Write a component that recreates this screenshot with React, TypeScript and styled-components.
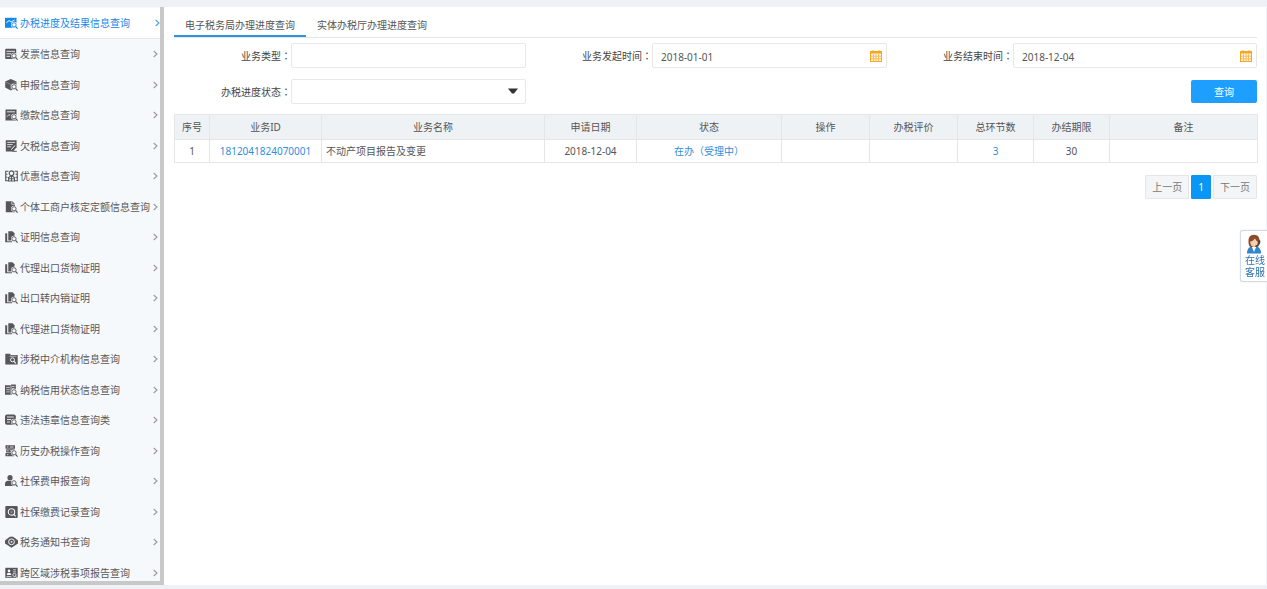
import React, { ReactNode } from "react";
import styled, { createGlobalStyle, css } from "styled-components";

const GlobalStyle = createGlobalStyle`
  *, *::before, *::after { box-sizing: border-box; }
  body {
    margin: 0;
    background: #eef1f5;
    color: #555;
    font: 10px/14px "Noto Sans", "Noto Sans CJK SC", sans-serif;
  }
  button, input, select { font: inherit; color: inherit; }
  a { color: inherit; text-decoration: none; }
`;

const Page = styled.div`
  display: flex;
  height: 100vh;
  padding: 7px 1px 4px 0;
`;

const Sidebar = styled.nav`
  flex: 0 0 164px;
  overflow: hidden;
  padding-top: 1px;
  background: #f5f9fc;
  border: solid #c8c8c8;
  border-width: 0 4px 4px 0;
`;

const Menu = styled.ul`
  margin: 0;
  padding: 0;
  list-style: none;
`;

const MenuLink = styled.a<{ $active?: boolean }>`
  --ground: #f5f9fc;
  display: flex;
  align-items: center;
  height: 31px;
  padding: 0 2px 0 5px;
  white-space: nowrap;
  color: #555759;
  li:nth-child(even) > & { height: 30px; }
  ${(p) =>
    p.$active &&
    css`
      --ground: #fff;
      padding-right: 0;
      background: #fff;
      border-bottom: 1px solid #e4e8eb;
      color: #1488e8;
    `}
`;

const MenuText = styled.span`
  flex: 1;
  margin-left: 2px;
`;

const MenuIcon = styled.svg`
  flex: none;
  width: 13px;
  height: 12px;
`;

const Chevron = styled.svg`
  flex: none;
  width: 5px;
  height: 8px;
  color: #999;
  ${MenuLink}[aria-current] & { color: #4ba3ea; }
`;

const Main = styled.main`
  flex: 1;
  min-width: 0;
  padding: 7px 9px 0 10px;
  background: #fff;
`;

const Tabs = styled.div`
  display: flex;
  border-bottom: 1px solid #e3e5e7;
`;

const Tab = styled.button<{ $active?: boolean }>`
  height: 23px;
  padding: 0 11px;
  background: none;
  border: 0;
  border-bottom: 2px solid ${(p) => (p.$active ? "#2c95dd" : "transparent")};
`;

const Form = styled.form`
  display: grid;
  grid-template-columns: repeat(3, 1fr);
  row-gap: 11px;
  padding: 5px 0 10px;
`;

const Field = styled.div<{ $last?: boolean }>`
  display: flex;
  align-items: center;
  padding-right: ${(p) => (p.$last ? 0 : 9)}px;
`;

const Label = styled.label`
  flex: 0 0 117px;
  text-align: right;
  color: #444;
`;

const Control = styled.div`
  position: relative;
  display: flex;
  align-items: center;
  flex: 1;
  min-width: 0;
  height: 25px;
  background: #fff;
  border: 1px solid #e8e8e8;
  border-radius: 2px;
`;

const Input = styled.input`
  flex: 1;
  min-width: 0;
  height: 23px;
  padding: 2px 8px 0;
  background: none;
  border: 0;
  outline: 0;
`;

const Select = styled.select`
  width: 100%;
  height: 23px;
  padding: 0 8px;
  appearance: none;
  background: none;
  border: 0;
  outline: 0;
`;

const Caret = styled.svg`
  position: absolute;
  right: 7px;
  top: 8px;
  width: 10px;
  height: 6px;
  pointer-events: none;
`;

const DateButton = styled.button`
  display: flex;
  padding: 0 4px;
  background: none;
  border: 0;
`;

const SubmitCell = styled.div`
  grid-column: 3;
  display: flex;
  justify-content: flex-end;
  align-items: center;
`;

const Submit = styled.button`
  width: 66px;
  height: 23px;
  padding: 0;
  background: #1e9fff;
  border: 0;
  border-radius: 2px;
  color: #fff;
`;

const Table = styled.table`
  width: 100%;
  table-layout: fixed;
  border-collapse: collapse;
`;

const Th = styled.th`
  height: 25px;
  padding: 0;
  background: #eff2f5;
  border: 1px solid #e4e6e8;
  font-weight: 400;
`;

const Td = styled.td<{ $left?: boolean }>`
  height: 23px;
  padding: 0 4px;
  border: 1px solid #e4e6e8;
  text-align: ${(p) => (p.$left ? "left" : "center")};
  white-space: nowrap;
`;

const CellLink = styled.a`
  color: #2e8fdc;
`;

const Pager = styled.nav`
  display: flex;
  justify-content: flex-end;
  gap: 2px;
  margin-top: 12px;
`;

const PageButton = styled.button<{ $active?: boolean }>`
  height: 24px;
  padding: 0 6px;
  background: ${(p) => (p.$active ? "#0a96f5" : "#f4f5f7")};
  border: 1px solid ${(p) => (p.$active ? "#0a96f5" : "#e4e6e9")};
  border-radius: 1px;
  color: ${(p) => (p.$active ? "#fff" : "#777")};
`;

const Service = styled.a`
  position: fixed;
  right: 0;
  top: 230px;
  width: 27px;
  padding: 3px 2px 3px 4px;
  background: #fff;
  border: 1px solid #cfdbe8;
  border-right: 0;
  border-radius: 3px 0 0 3px;
  box-shadow: 0 0 2px #dde5ee;
  color: #2a6fae;
  line-height: 12px;
`;

const Avatar = styled.svg`
  display: block;
  width: 18px;
  height: 20px;
`;

const Lens = () => (
  <>
    <circle cx="9" cy="7.8" r="3" fill="var(--ground)" />
    <path d="m10.600 9.500 2 2" stroke="var(--ground)" strokeWidth="2.400" />
    <circle cx="9" cy="7.800" r="2.100" fill="none" stroke="currentColor" strokeWidth=".9" />
    <path d="m10.600 9.500 2 2.100" stroke="currentColor" strokeWidth="1.100" />
  </>
);

const icons: Record<string, ReactNode> = {
  progress: (
    <>
      <path d="M0 .8h11.500v10H0z" fill="currentColor" />
      <path d="M1.300 5.800 4 3.600l2.200 1.200 3.500-1.800" fill="none" stroke="#fff" strokeWidth=".9" />
      <Lens />
    </>
  ),
  invoice: (
    <>
      <rect x=".2" y=".8" width="11" height="10.200" rx="1" fill="currentColor" />
      <path d="M1.500 3.300h8.500M1.500 5.800h4.500M1.500 8.300H5" stroke="var(--ground)" strokeWidth=".9" />
      <Lens />
    </>
  ),
  cube: (
    <>
      <path d="m5.800 0 5.700 2.600v5.800l-5.700 3L.2 8.400V2.600z" fill="currentColor" />
      <path d="m.8 3.200 5 2.300 5-2.300M5.800 5.500v5" fill="none" stroke="#b4b8bb" strokeWidth=".5" />
      <Lens />
    </>
  ),
  payment: (
    <>
      <path d="M.5.5h11V11.500H.5z" fill="currentColor" />
      <path d="M2 2.800h8M2 7.600l2-2 1.200 1" fill="none" stroke="var(--ground)" strokeWidth=".9" />
      <Lens />
    </>
  ),
  arrears: (
    <>
      <path d="M.8.3h10.800v7L8 11.500H.8z" fill="currentColor" />
      <path d="M2.200 2.400h7.900M2.200 4.600h5.500M2.200 6.800h4" stroke="var(--ground)" strokeWidth=".8" />
      <path d="M6.300 9.700 10 5.400" stroke="var(--ground)" strokeWidth="1" />
      <path d="M7.500 11.300h4.300" stroke="currentColor" />
    </>
  ),
  benefit: (
    <>
      <path d="M3.500 1.200H.7v9.600h2.800M9.500 1.200h2.800v9.600H9.500M.7 4.200h1.800M.7 7.300h1.800M10.500 4.200h1.800M10.500 7.300h1.800" fill="none" stroke="currentColor" strokeWidth="1.100" />
      <circle cx="6.500" cy="3.200" r="2.300" fill="none" stroke="currentColor" strokeWidth="1.200" />
      <path d="M3.500 11V7.800L5.200 6.300h2.600l1.700 1.500V11zM6.500 6.500V11M4 8.800h5" fill="none" stroke="currentColor" strokeWidth="1.100" />
    </>
  ),
  household: (
    <>
      <path d="M.8.3h6.500L10 3v8.200H.8z" fill="currentColor" />
      <path d="M6.800.3v3H10" fill="none" stroke="var(--ground)" strokeWidth=".7" />
      <Lens />
    </>
  ),
  certificate: (
    <>
      <path d="M3.300.3h4.200L9.500 2.300v7.200H3.300z" fill="currentColor" />
      <path d="M2.200 2.300H.2v8.900h7V10.200H2.200z" fill="currentColor" />
      <Lens />
    </>
  ),
  agency: (
    <>
      <path d="M.3.800h4.500L6 2h6.700v9.500H.3z" fill="currentColor" />
      <path d="M4.500 3.200h7" stroke="var(--ground)" strokeWidth=".6" />
      <circle cx="7.500" cy="6.800" r="2" fill="none" stroke="var(--ground)" />
      <path d="m9 8.400 1.900 2" stroke="var(--ground)" strokeWidth="1.100" />
    </>
  ),
  credit: (
    <>
      <path d="M0 1.300h6V.5h4.800v7H7v3.300H0z" fill="currentColor" />
      <path d="M1.300 3.500h3.500M1.300 5.700h3.500M1.300 7.900h3.500M7 2.500h2.500M7 4.500h2.500M6 1.500v9" stroke="var(--ground)" strokeWidth=".7" />
      <Lens />
    </>
  ),
  violation: (
    <>
      <rect y=".5" width="10.800" height="10.300" rx="2" fill="currentColor" />
      <path d="M2 3h6.800M2 5.500h4M2 8h3" stroke="var(--ground)" strokeWidth=".9" />
      <Lens />
    </>
  ),
  history: (
    <>
      <path d="M.5.300h9.500v3.400H.5zM1.200 4.200h8.300v3.200H1.200zM.5 8h8.500v3.300H.5z" fill="currentColor" />
      <path d="M2 2h1.400M2.200 5.800h1.400M2 9.700h1.400M5 2h3.500M5 5.800h2" stroke="var(--ground)" strokeWidth=".8" />
      <Lens />
    </>
  ),
  person: (
    <>
      <circle cx="5" cy="2.700" r="2.600" fill="currentColor" />
      <path d="M0 11V9q0-2.800 3-3.200h4q2.400.4 2.800 2.200v3z" fill="currentColor" />
      <Lens />
    </>
  ),
  record: (
    <>
      <rect x=".3" width="12.400" height="12" rx="1" fill="currentColor" />
      <circle cx="6.500" cy="5.900" r="3.200" fill="none" stroke="var(--ground)" strokeWidth="1.100" />
      <circle cx="6.500" cy="5.900" r="1.200" fill="#8b8d8f" />
      <path d="m8.600 8.200 2 2.100" stroke="var(--ground)" strokeWidth="1.100" />
    </>
  ),
  notice: (
    <>
      <path d="M0 4.500 2.500 2.500Q6.500-1.300 10.500 2.500L13 4.500v3L6.500 11.800 0 7.500z" fill="currentColor" />
      <circle cx="6.500" cy="5.800" r="2.900" fill="none" stroke="var(--ground)" />
      <circle cx="6.500" cy="5.800" r=".9" fill="var(--ground)" />
    </>
  ),
  region: (
    <>
      <path d="M.3.800h12.400v10H.3z" fill="currentColor" />
      <circle cx="4" cy="3.900" r="1.300" fill="var(--ground)" />
      <path d="M1.700 8q0-2.300 2.300-2.300T6.300 8z" fill="var(--ground)" />
      <path d="M8 2.800h3M8 4.800h3M1.500 9.500h5" stroke="var(--ground)" strokeWidth=".7" />
      <circle cx="9.400" cy="7.900" r="1.600" fill="none" stroke="var(--ground)" strokeWidth=".8" />
      <path d="m10.600 9.200 2.200 2.300" stroke="var(--ground)" strokeWidth=".9" />
    </>
  ),
};

const menu: [string, string][] = [
  ["progress", "办税进度及结果信息查询"],
  ["invoice", "发票信息查询"],
  ["cube", "申报信息查询"],
  ["payment", "缴款信息查询"],
  ["arrears", "欠税信息查询"],
  ["benefit", "优惠信息查询"],
  ["household", "个体工商户核定定额信息查询"],
  ["certificate", "证明信息查询"],
  ["certificate", "代理出口货物证明"],
  ["certificate", "出口转内销证明"],
  ["certificate", "代理进口货物证明"],
  ["agency", "涉税中介机构信息查询"],
  ["credit", "纳税信用状态信息查询"],
  ["violation", "违法违章信息查询类"],
  ["history", "历史办税操作查询"],
  ["person", "社保费申报查询"],
  ["record", "社保缴费记录查询"],
  ["notice", "税务通知书查询"],
  ["region", "跨区域涉税事项报告查询"],
];

const columns: [string, number][] = [
  ["序号", 35],
  ["业务ID", 112],
  ["业务名称", 223],
  ["申请日期", 92],
  ["状态", 145],
  ["操作", 88],
  ["办税评价", 88],
  ["总环节数", 76],
  ["办结期限", 76],
  ["备注", 148],
];

const CalendarIcon = () => (
  <svg width="12" height="12" viewBox="0 0 12 12" aria-hidden="true">
    <rect x=".5" y="1.5" width="11" height="10" fill="#fff4dc" stroke="#f5a623" />
    <path d="M0 1h12v2.5H0z" fill="#f5a623" />
    <path d="M3.5 3.5v8M6 3.5v8M8.5 3.5v8M1 6.2h10M1 8.8h10" stroke="#f7b54a" strokeWidth=".8" />
    <path d="M3 0v2M9 0v2" stroke="#f5a623" />
  </svg>
);

// The Traditional Chinese forms centre the full-width colon in its square.
function FieldLabel({ id, text }: { id: string; text: string }) {
  return (
    <Label htmlFor={id}>
      {text}
      <span lang="zh-Hant">：</span>
    </Label>
  );
}

function DateField({ id, text, value, last }: { id: string; text: string; value: string; last?: boolean }) {
  return (
    <Field $last={last}>
      <FieldLabel id={id} text={text} />
      <Control>
        <Input id={id} type="text" defaultValue={value} />
        <DateButton type="button" aria-label={text}>
          <CalendarIcon />
        </DateButton>
      </Control>
    </Field>
  );
}

export default function App() {
  return (
    <>
      <GlobalStyle />
      <Page lang="zh-CN">
        <Sidebar>
          <Menu>
            {menu.map(([icon, text], i) => (
              <li key={text}>
                <MenuLink href="#" $active={i === 0} aria-current={i === 0 ? "page" : undefined}>
                  <MenuIcon viewBox="0 0 13 12" aria-hidden="true">
                    {icons[icon]}
                  </MenuIcon>
                  <MenuText>{text}</MenuText>
                  <Chevron viewBox="0 0 5 8" aria-hidden="true">
                    <path d="m.7 1 3.3 3L.7 7" fill="none" stroke="currentColor" strokeWidth="1.1" />
                  </Chevron>
                </MenuLink>
              </li>
            ))}
          </Menu>
        </Sidebar>
        <Main>
          <Tabs role="tablist">
            <Tab role="tab" aria-selected="true" $active>
              电子税务局办理进度查询
            </Tab>
            <Tab role="tab" aria-selected="false">
              实体办税厅办理进度查询
            </Tab>
          </Tabs>
          <Form onSubmit={(e) => e.preventDefault()}>
            <Field>
              <FieldLabel id="type" text="业务类型" />
              <Control>
                <Input id="type" type="text" />
              </Control>
            </Field>
            <DateField id="start" text="业务发起时间" value="2018-01-01" />
            <DateField id="end" text="业务结束时间" value="2018-12-04" last />
            <Field>
              <FieldLabel id="status" text="办税进度状态" />
              <Control>
                <Select id="status" defaultValue="">
                  <option value="" />
                </Select>
                <Caret viewBox="0 0 10 6" aria-hidden="true">
                  <path d="M0 .5h10L6 5.5H4z" fill="#333" />
                </Caret>
              </Control>
            </Field>
            <SubmitCell>
              <Submit type="submit">查询</Submit>
            </SubmitCell>
          </Form>
          <Table>
            <colgroup>
              {columns.map(([name, width]) => (
                <col key={name} width={width} />
              ))}
            </colgroup>
            <thead>
              <tr>
                {columns.map(([name]) => (
                  <Th key={name} scope="col">
                    {name}
                  </Th>
                ))}
              </tr>
            </thead>
            <tbody>
              <tr>
                <Td>1</Td>
                <Td>
                  <CellLink href="#">1812041824070001</CellLink>
                </Td>
                <Td $left>不动产项目报告及变更</Td>
                <Td>2018-12-04</Td>
                <Td>
                  <CellLink href="#">在办（受理中）</CellLink>
                </Td>
                <Td />
                <Td />
                <Td>
                  <CellLink href="#">3</CellLink>
                </Td>
                <Td>30</Td>
                <Td />
              </tr>
            </tbody>
          </Table>
          <Pager aria-label="分页">
            <PageButton>上一页</PageButton>
            <PageButton $active aria-current="page">
              1
            </PageButton>
            <PageButton>下一页</PageButton>
          </Pager>
        </Main>
        <Service href="#">
          <Avatar viewBox="0 0 18 20" aria-hidden="true">
            <path d="M2 19.5q0-6 4.5-7h5q4.500 1 4.500 7z" fill="#2f86cf" />
            <path d="m6.500 12 2.500 6 2.500-6z" fill="#fff" />
            <path d="M3.500 8Q3 .8 9 .8T14.500 8q0 4-2 5H5.500q-2-1-2-5z" fill="#8a4d2c" />
            <ellipse cx="9" cy="8.300" rx="3.700" ry="4.600" fill="#f8cfae" />
            <path d="M5 7.500q3.500-.5 5-3 1 2.500 3 3Q13.500 2.500 9 2.500T5 7.500z" fill="#8a4d2c" />
            <path d="M14.300 7.500v2.500q-1 2-4 2" fill="none" stroke="#333" strokeWidth=".9" />
            <rect x="13.300" y="6" width="2" height="3.500" rx="1" fill="#444" />
          </Avatar>
          在线
          <br />
          客服
        </Service>
      </Page>
    </>
  );
}
